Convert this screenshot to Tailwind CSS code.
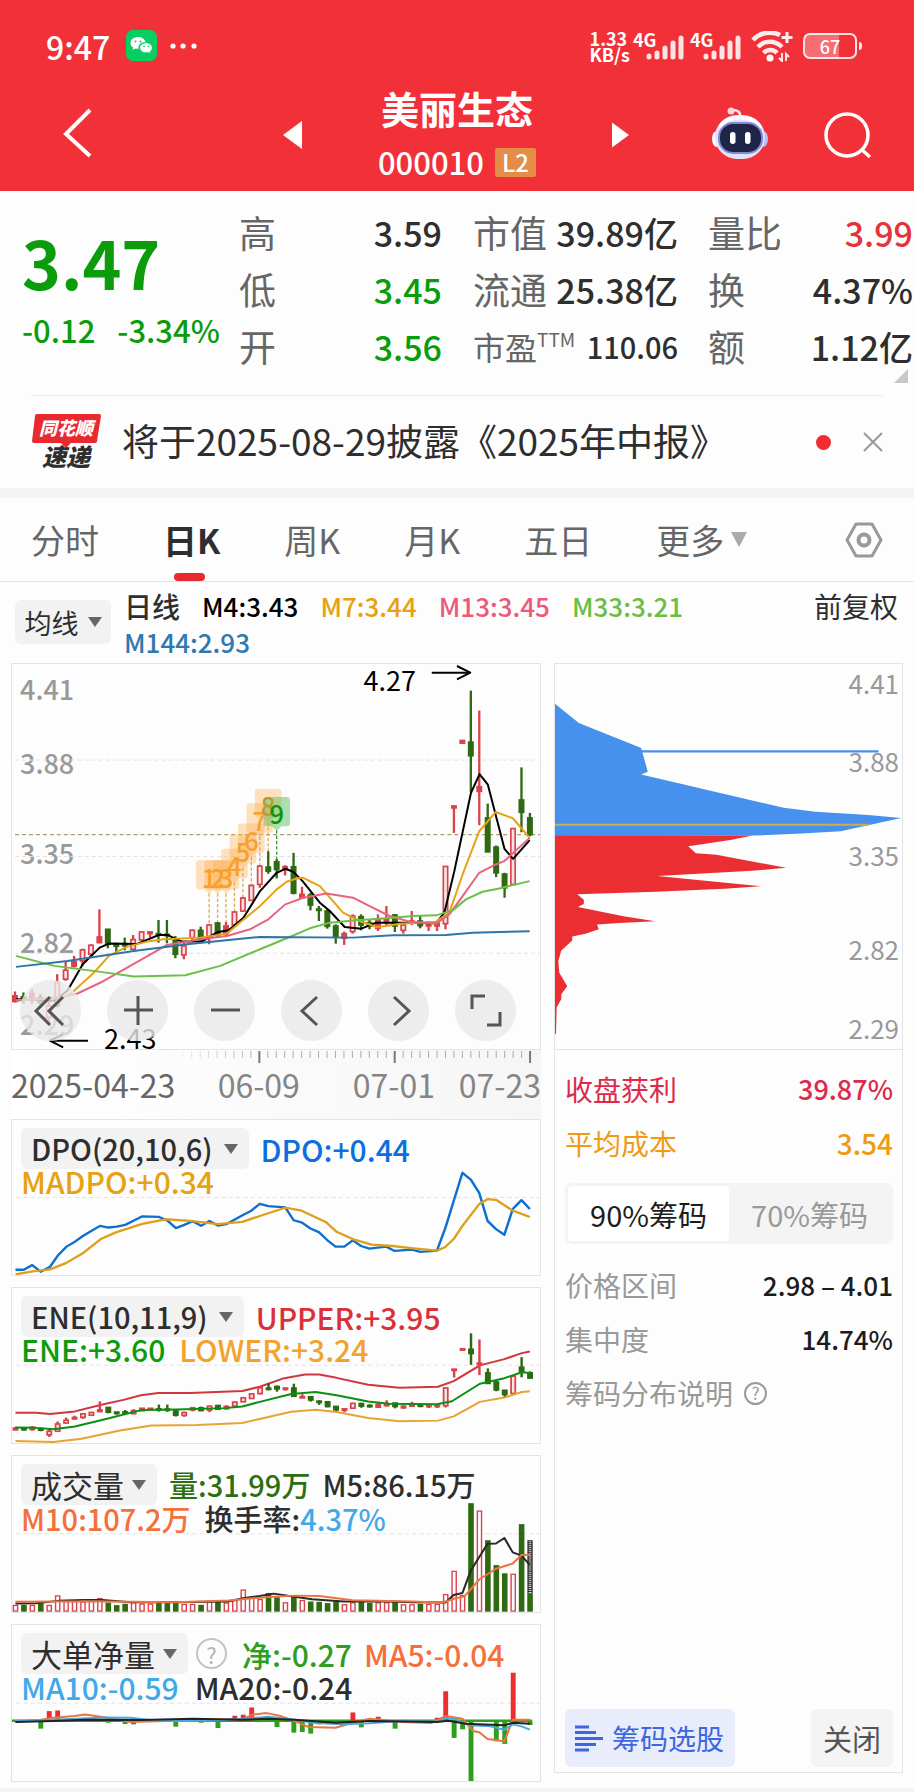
<!DOCTYPE html>
<html lang="zh-CN">
<head>
    <meta charset="UTF-8">
    <meta name="viewport" content="width=device-width, initial-scale=1.0">
    <title>美丽生态 000010</title>
    <script src="https://cdn.jsdelivr.net/npm/@tailwindcss/browser@4"></script>
</head>
<body class="bg-[#fdfdfd] text-[#2e2e2e] font-['Noto_Sans_CJK_SC','Liberation_Sans',sans-serif] font-medium leading-none">

    <!-- Header -->
    <header class="bg-[#f23038] text-white h-[191px] overflow-hidden">
        <div class="h-[92px] pl-[46px] pr-[52px] flex items-center justify-between">
            <div class="flex items-center">
                <span class="w-[66px] text-[32px] leading-8 font-medium">9:47</span>
                <svg class="ml-[14px] size-8" viewBox="0 0 32 32">
                    <rect width="31" height="31" rx="7" fill="#07ce63"/>
                    <path d="M12 7C8 7 4.500 9.500 4.500 13c0 2 1 3.500 2.700 4.600L6.500 20l3-1.500c1 .3 2 .4 3 .3-.6-4 3-7 7-6.700C18.800 9 15.500 7 12 7z" fill="#fff"/>
                    <path d="M20 12.800c-3.600 0-6.200 2.200-6.200 5s2.600 5 6.200 5c.8 0 1.500-.1 2.200-.3l2.400 1.300-.6-2.100c1.500-1 2.400-2.300 2.400-3.900 0-2.800-2.800-5-6.400-5z" fill="#fff" stroke="#07ce63" stroke-width=".8"/>
                    <g fill="#07ce63"><circle cx="9.500" cy="11.500" r="1"/><circle cx="14.500" cy="11.500" r="1"/><circle cx="18" cy="16.500" r=".8"/><circle cx="22.300" cy="16.500" r=".8"/></g>
                </svg>
                <svg class="ml-3 h-2 w-[28px]" viewBox="0 0 28 8" fill="#fff"><circle cx="3" cy="4" r="2.600"/><circle cx="13" cy="4" r="2.600"/><circle cx="24" cy="4" r="2.600"/></svg>
            </div>
            <div class="flex items-center">
                <div class="text-[18px] leading-4 font-bold">1.33<br>KB/s</div>
                <div class="relative ml-[3px] w-[51px] h-[30px]">
                    <span class="absolute left-0 top-0 text-[18px] leading-4 font-bold">4G</span>
                    <svg class="absolute right-0 top-0 w-[38px] h-[30px]" viewBox="0 0 38 30" stroke="#fde4e4" stroke-width="5" stroke-linecap="round"><path d="M3 26v-1M11 26v-4M19 26v-9M27 26V12M35 26V7"/></svg>
                </div>
                <div class="relative ml-[6px] w-[51px] h-[30px]">
                    <span class="absolute left-0 top-0 text-[18px] leading-4 font-bold">4G</span>
                    <svg class="absolute right-0 top-0 w-[38px] h-[30px]" viewBox="0 0 38 30" stroke="#fde4e4" stroke-width="5" stroke-linecap="round"><path d="M3 26v-1M11 26v-4M19 26v-9M27 26V12M35 26V7"/></svg>
                </div>
                <svg class="ml-[10px] w-[42px] h-[31px]" viewBox="0 0 42 31" fill="none" stroke="#fdeaea" stroke-width="4.500">
                    <path d="M2 9C9 1 21 0 29 4M7 16C13 9 24 9 31 16M12.500 22c4-4 10-4 13.500 0"/>
                    <circle cx="19" cy="27" r="3.500" fill="#fff" stroke="none"/>
                    <path d="M36 1v11M30.500 6.500h11" stroke-width="3"/>
                    <path d="M31 22v8l-3-3M35 30v-7l3 3" stroke-width="2"/>
                </svg>
                <div class="ml-[10px] flex items-center">
                    <div class="w-[54px] h-[26px] rounded-[7px] border-2 border-white/85 bg-linear-to-r from-white/30 from-67% to-transparent to-67% text-[18px] leading-[22px] text-center">67</div>
                    <div class="w-[3px] h-2 bg-white/85 rounded-r-sm ml-[2px]"></div>
                </div>
            </div>
        </div>
        <div class="relative h-[99px]">
            <a href="#back" aria-label="返回" class="absolute left-[60px] top-[16px]">
                <svg class="w-8 h-[50px]" viewBox="0 0 32 50" fill="none" stroke="#fff" stroke-width="4"><path d="M30 2L6 26l24 22"/></svg>
            </a>
            <div class="absolute inset-x-0 top-0 flex flex-col items-center">
                <h1 class="text-[38px] leading-8 font-bold">美丽生态</h1>
                <div class="mt-[22px] flex items-center gap-[11px]">
                    <span class="text-[31px] leading-8">000010</span>
                    <span class="bg-[#e38d47] rounded-[2px] h-[29px] px-[7px] text-[24px] leading-[28px]">L2</span>
                </div>
            </div>
            <button aria-label="上一只" class="absolute right-[67%] top-[29px]"><svg class="w-5 h-7" viewBox="0 0 20 28" fill="#fff"><path d="M20 0v28L1 14z"/></svg></button>
            <button aria-label="下一只" class="absolute left-[67%] top-[29px]"><svg class="w-5 h-7" viewBox="0 0 20 28" fill="#fff"><path d="M-2 0v28L17 14z"/></svg></button>
            <button aria-label="智能助手" class="absolute right-[145px] top-[14px]">
                <svg class="w-[58px] h-[54px]" viewBox="0 0 58 54">
                    <path d="M21 4c6 0 9 2 8 8" fill="none" stroke="#fbe5ee" stroke-width="2.500"/><circle cx="20" cy="5" r="3.500" fill="#fbd7dc"/>
                    <ellipse cx="6" cy="33" rx="5" ry="8" fill="#fff"/><ellipse cx="52" cy="33" rx="5" ry="8" fill="#b7bdf5"/>
                    <rect x="4" y="9" width="50" height="44" rx="22" fill="#dfe3fb"/>
                    <path d="M9 22c6-14 34-14 40 0" fill="none" stroke="#fff" stroke-width="4"/>
                    <rect x="8" y="17" width="43" height="30" rx="14" fill="#1e2647" stroke="#8a84d8" stroke-width="2"/>
                    <rect x="19" y="26" width="5.500" height="12" rx="2.700" fill="#fff"/><rect x="34" y="26" width="5.500" height="12" rx="2.700" fill="#fff"/>
                </svg>
            </button>
            <button aria-label="搜索" class="absolute right-[42px] top-[19px]"><svg class="size-12" viewBox="0 0 48 48" fill="none" stroke="#fff" stroke-width="3.500"><circle cx="23" cy="24" r="21"/><path d="M37 38l9 8"/></svg></button>
        </div>
    </header>

    <!-- Quote -->
    <section class="relative h-[204px] pl-[22px] pr-[1px] grid grid-cols-[217fr_203fr_236fr_235fr] whitespace-nowrap">
        <div class="pt-[35px] text-[#0a9c0a]">
            <div class="text-[66px] leading-[70px] font-bold">3.47</div>
            <div class="mt-[18px] flex gap-[22px] text-[31px] leading-8"><span>-0.12</span><span>-3.34%</span></div>
        </div>
        <dl class="pt-[13px] text-[37px] leading-[57px]">
            <div class="flex justify-between"><dt class="text-[#666] font-normal">高</dt><dd class="text-[34px]">3.59</dd></div>
            <div class="flex justify-between"><dt class="text-[#666] font-normal">低</dt><dd class="text-[34px] text-[#0a9c0a]">3.45</dd></div>
            <div class="flex justify-between"><dt class="text-[#666] font-normal">开</dt><dd class="text-[34px] text-[#0a9c0a]">3.56</dd></div>
        </dl>
        <dl class="pt-[13px] pl-[31px] text-[37px] leading-[57px]">
            <div class="flex justify-between"><dt class="text-[#666] font-normal">市值</dt><dd class="text-[34px]">39.89亿</dd></div>
            <div class="flex justify-between"><dt class="text-[#666] font-normal">流通</dt><dd class="text-[34px]">25.38亿</dd></div>
            <div class="flex justify-between"><dt class="text-[#666] font-normal text-[32px] flex">市盈<span class="text-[19px] leading-[42px]">TTM</span></dt><dd class="text-[29px]">110.06</dd></div>
        </dl>
        <dl class="pt-[13px] pl-[30px] text-[37px] leading-[57px]">
            <div class="flex justify-between"><dt class="text-[#666] font-normal">量比</dt><dd class="text-[34px] text-[#e3343b]">3.99</dd></div>
            <div class="flex justify-between"><dt class="text-[#666] font-normal">换</dt><dd class="text-[34px]">4.37%</dd></div>
            <div class="flex justify-between"><dt class="text-[#666] font-normal">额</dt><dd class="text-[34px]">1.12亿</dd></div>
        </dl>
        <svg class="absolute right-[6px] bottom-[12px] size-[14px]" viewBox="0 0 14 14" fill="#c8c8c8"><path d="M14 0v14H0z"/></svg>
    </section>

    <!-- News -->
    <section class="mx-[31px] h-[93px] border-t border-[#ececec] flex items-center">
        <div class="relative w-[70px] h-[58px] italic font-black text-center">
            <svg class="absolute inset-0 w-full h-full" viewBox="0 0 70 58" fill="#e8292f"><path d="M6 1h62q2 0 2 2l-4 25q0 2-3 2H40l-5 5-5-5H4q-3 0-3-2L4 3q0-2 2-2z"/></svg>
            <div class="relative text-white text-[18px] leading-[29px]">同花顺</div>
            <div class="relative text-[24px] leading-[27px]">速递</div>
        </div>
        <a href="#news" class="ml-[21px] text-[37px] leading-[38px] pb-1 font-normal whitespace-nowrap">将于2025-08-29披露《2025年中报》</a>
        <span class="ml-auto size-[15px] rounded-full bg-[#f02b31]"></span>
        <button aria-label="关闭公告" class="ml-[32px]"><svg class="size-5" viewBox="0 0 20 20" stroke="#999" stroke-width="2"><path d="M1 1l18 18M19 1L1 19"/></svg></button>
    </section>
    <div class="h-[10px] bg-[#f4f4f4]"></div>

    <!-- Period tabs -->
    <nav class="h-[84px] px-[31px] border-b border-[#e4e4e4] flex items-center text-[34px] text-[#666] font-normal whitespace-nowrap">
        <div class="flex h-full gap-[64px]">
            <button>分时</button>
            <button class="relative text-[#2e2e2e] font-bold">日K<span class="absolute bottom-0 left-[11px] w-[31px] h-2 rounded-full bg-[#e8292f]"></span></button>
            <button>周K</button>
            <button>月K</button>
            <button>五日</button>
            <button class="flex items-center gap-[7px]">更多<svg class="w-4 h-[15px]" viewBox="0 0 16 15" fill="#aaa"><path d="M0 0h16L8 15z"/></svg></button>
        </div>
        <button aria-label="设置" class="ml-auto"><svg class="w-[38px] h-[36px]" viewBox="0 0 38 36" fill="none" stroke="#999" stroke-width="3" stroke-linejoin="round"><path d="M11 2h16l9 16-9 16H11L2 18z"/><circle cx="19" cy="18" r="5.500" stroke-width="4"/></svg></button>
    </nav>

    <!-- Moving averages -->
    <section class="h-[81px] pl-[15px] pr-[16px] flex">
        <button class="mt-[18px] h-[44px] w-[96px] shrink-0 rounded-md bg-[#f2f2f2] flex items-center justify-center gap-[9px] text-[27px] font-normal">均线<svg class="w-[14px] h-[10px]" viewBox="0 0 14 10" fill="#666"><path d="M0 0h14L7 10z"/></svg></button>
        <div class="ml-[13px] mt-[6px] flex-1 flex flex-wrap content-start gap-x-[22px] text-[26px] leading-[36px]">
            <span class="text-[28px]">日线</span>
            <span class="text-black">M4:3.43</span>
            <span class="text-[#e6a20f]">M7:3.44</span>
            <span class="text-[#ec5a7b]">M13:3.45</span>
            <span class="text-[#6cbd45]">M33:3.21</span>
            <span class="w-full text-[#2f78b0]">M144:2.93</span>
        </div>
        <button class="mt-[6px] h-[36px] text-[28px] font-normal">前复权</button>
    </section>

    <main class="px-[11px] grid grid-cols-[530fr_349fr] gap-[13px]">
        <!-- Left: charts -->
        <div>
            <div class="relative h-[387px] border border-[#e4e4e4]">
                <div class="absolute left-[8px] inset-y-0 text-[27px] text-[#999]">
                    <div class="absolute top-[11px]">4.41</div>
                    <div class="absolute top-[85px]">3.88</div>
                    <div class="absolute top-[175px]">3.35</div>
                    <div class="absolute top-[264px]">2.82</div>
                    <div class="absolute top-[346px]">2.29</div>
                </div>
                <svg id="kline" class="absolute inset-0 w-full h-full" viewBox="33 27 1590 1158" preserveAspectRatio="none"></svg>
                <div id="marks" class="absolute inset-0"></div>
                <div class="absolute right-[124px] top-[2px] text-[27px] text-black font-normal">4.27</div>
                <div class="absolute left-[92px] bottom-[-2px] text-[27px] text-black font-normal">2.43</div>
                <div class="absolute left-[8px] bottom-[8px] flex gap-[26px]">
                    <button aria-label="最早" class="size-[61px] rounded-full bg-[#e9e9e9]/80"><svg viewBox="0 0 61 61" fill="none" stroke="#555" stroke-width="3"><path d="M30 17L16 31l14 14M43 17L29 31l14 14"/></svg></button>
                    <button aria-label="放大" class="size-[61px] rounded-full bg-[#e9e9e9]/80"><svg viewBox="0 0 61 61" stroke="#555" stroke-width="3"><path d="M31 16v29M17 30h29"/></svg></button>
                    <button aria-label="缩小" class="size-[61px] rounded-full bg-[#e9e9e9]/80"><svg viewBox="0 0 61 61" stroke="#555" stroke-width="3"><path d="M17 30h29"/></svg></button>
                    <button aria-label="左移" class="size-[61px] rounded-full bg-[#e9e9e9]/80"><svg viewBox="0 0 61 61" fill="none" stroke="#555" stroke-width="3"><path d="M36 17L21 31l15 14"/></svg></button>
                    <button aria-label="右移" class="size-[61px] rounded-full bg-[#e9e9e9]/80"><svg viewBox="0 0 61 61" fill="none" stroke="#555" stroke-width="3"><path d="M26 17l15 14-15 14"/></svg></button>
                    <button aria-label="全屏" class="size-[61px] rounded-full bg-[#e9e9e9]/80"><svg viewBox="0 0 61 61" fill="none" stroke="#555" stroke-width="3"><path d="M17 29V16h13M32 45h13V32"/></svg></button>
                </div>
            </div>
            <div class="relative h-[69px] bg-linear-to-r from-white to-[#f6f6f6] text-[32px] text-[#858585] font-normal">
                <svg id="ticks" class="absolute inset-x-0 top-0 w-full h-[14px]" viewBox="11 0 530 14" preserveAspectRatio="none"></svg>
                <span class="absolute left-0 top-[18px] text-[#666]">2025-04-23</span>
                <span class="absolute left-[39%] top-[18px]">06-09</span>
                <span class="absolute right-[20%] top-[18px]">07-01</span>
                <span class="absolute right-0 top-[18px]">07-23</span>
            </div>

            <div class="flex flex-col gap-[11px]">
                <div class="relative h-[157px] border border-[#e4e4e4] bg-[#fdfdfd]">
                    <svg id="dpo" class="absolute inset-0 w-full h-full" viewBox="31 27 1511 470" preserveAspectRatio="none"></svg>
                    <div class="relative pl-[9px] pt-[8px] text-[30px] whitespace-nowrap">
                        <div class="flex items-center gap-[12px]">
                            <button class="h-[41px] pl-[10px] pr-[11px] rounded-md bg-[#f2f2f2] flex items-center gap-[11px] text-[29px]">DPO(20,10,6)<svg class="w-[14px] h-[10px]" viewBox="0 0 14 10" fill="#666"><path d="M0 0h14L7 10z"/></svg></button>
                            <span class="text-[#0b6fe0]">DPO:+0.44</span>
                        </div>
                        <div class="h-7 leading-6 text-[#e6a20f]">MADPO:+0.34</div>
                    </div>
                </div>

                <div class="relative h-[157px] border border-[#e4e4e4] bg-[#fdfdfd]">
                    <svg id="ene" class="absolute inset-0 w-full h-full" viewBox="31 532 1511 471" preserveAspectRatio="none"></svg>
                    <div class="relative pl-[9px] pt-[8px] text-[30px] whitespace-nowrap">
                        <div class="flex items-center gap-[12px]">
                            <button class="h-[41px] pl-[10px] pr-[11px] rounded-md bg-[#f2f2f2] flex items-center gap-[11px] text-[29px]">ENE(10,11,9)<svg class="w-[14px] h-[10px]" viewBox="0 0 14 10" fill="#666"><path d="M0 0h14L7 10z"/></svg></button>
                            <span class="text-[#da3038]">UPPER:+3.95</span>
                        </div>
                        <div class="h-7 leading-6 flex gap-[14px]"><span class="text-[#0a9c0a]">ENE:+3.60</span><span class="text-[#f2a32e]">LOWER:+3.24</span></div>
                    </div>
                </div>

                <div class="relative h-[158px] border border-[#e4e4e4] bg-[#fdfdfd]">
                    <svg id="vol" class="absolute inset-0 w-full h-full" viewBox="31 16 1511 476" preserveAspectRatio="none"></svg>
                    <div class="relative pl-[9px] pt-[8px] text-[29px] whitespace-nowrap">
                        <div class="flex items-center gap-[12px]">
                            <button class="h-[41px] pl-[10px] pr-[11px] rounded-md bg-[#f2f2f2] flex items-center gap-[8px] text-[31px] font-normal">成交量<svg class="w-[14px] h-[10px]" viewBox="0 0 14 10" fill="#666"><path d="M0 0h14L7 10z"/></svg></button>
                            <span class="text-[#2c6e10]">量:31.99万</span><span>M5:86.15万</span>
                        </div>
                        <div class="h-7 leading-[26px] flex gap-[14px]"><span class="text-[#f4703a]">M10:107.2万</span><span>换手率:<span class="text-[#42a9e8]">4.37%</span></span></div>
                    </div>
                </div>

                <div class="relative h-[158px] border border-[#e4e4e4] bg-[#fdfdfd]">
                    <svg id="big" class="absolute inset-0 w-full h-full" viewBox="31 522 1511 471" preserveAspectRatio="none"></svg>
                    <div class="relative pl-[9px] pt-[8px] text-[30px] whitespace-nowrap">
                        <div class="flex items-center">
                            <button class="h-[41px] pl-[10px] pr-[11px] rounded-md bg-[#f2f2f2] flex items-center gap-[8px] text-[31px] font-normal">大单净量<svg class="w-[14px] h-[10px]" viewBox="0 0 14 10" fill="#666"><path d="M0 0h14L7 10z"/></svg></button>
                            <button aria-label="说明" class="ml-[8px] size-[31px] rounded-full border-2 border-[#c4c4c4] text-[#b5b5b5] text-[22px] leading-[26px] font-normal">?</button>
                            <span class="ml-[15px] text-[#2f9e1f]">净:-0.27</span><span class="ml-[12px] text-[#f4703a]">MA5:-0.04</span>
                        </div>
                        <div class="h-7 leading-[26px] flex gap-[16px]"><span class="text-[#42a9e8]">MA10:-0.59</span><span>MA20:-0.24</span></div>
                    </div>
                </div>
            </div>
        </div>

        <!-- Right: chip distribution -->
        <aside class="mb-[9px] border border-[#e4e4e4] flex flex-col">
            <div class="relative h-[386px] border-b border-[#e4e4e4] text-[26px] text-[#999] font-normal">
                <svg class="absolute inset-0 w-full h-full" viewBox="43 25 1047 1160" preserveAspectRatio="none">
                    <path fill="#4690ee" d="M43 145L115 203 303 278 323 350 303 358 733 458 828 470 988 480 1088 489 1015 505 905 529 787 536 640 542H43z"/>
                    <path stroke="#4690ee" stroke-width="7" d="M303 288H1019"/>
                    <path stroke="#d3a94d" stroke-width="6" d="M43 509H990"/>
                    <path fill="#ea2e31" d="M43 541L640 542 572 555 445 574 468 595 530 600 740 639 637 648 352 664 664 695 555 702 347 711 110 719 130 735 130 748 112 757 250 785 345 800 238 805 170 810 175 824 135 838 95 846 95 858 62 888 53 920 56 955 80 996 62 1020 62 1034 48 1060 46 1140H43z"/>
                </svg>
                <span class="absolute right-[3px] top-[6px]">4.41</span>
                <span class="absolute right-[3px] top-[84px]">3.88</span>
                <span class="absolute right-[3px] top-[178px]">3.35</span>
                <span class="absolute right-[3px] top-[272px]">2.82</span>
                <span class="absolute right-[3px] top-[351px]">2.29</span>
            </div>
            <div class="flex-1 flex flex-col pl-[10px] pr-[9px] pt-[12px] pb-[5px] text-[28px] leading-[54px] font-normal">
                <div class="flex justify-between text-[#dd2a4a]"><span>收盘获利</span><span class="text-[27px] font-medium">39.87%</span></div>
                <div class="flex justify-between text-[#f09a13]"><span>平均成本</span><span class="font-medium">3.54</span></div>
                <div class="mt-[13px] h-[61px] rounded-md bg-[#f4f4f4] p-[3px] grid grid-cols-2">
                    <button class="bg-white rounded-sm text-[29px] text-[#1c1c1c]">90%筹码</button>
                    <button class="text-[29px] text-[#999]">70%筹码</button>
                </div>
                <div class="mt-[14px] flex justify-between"><span class="text-[#999]">价格区间</span><span class="text-[26px] font-medium text-[#1c1c1c]">2.98 – 4.01</span></div>
                <div class="flex justify-between"><span class="text-[#999]">集中度</span><span class="text-[26px] font-medium text-[#1c1c1c]">14.74%</span></div>
                <a href="#help" class="flex items-center text-[#999]">筹码分布说明<span class="ml-[11px] size-[23px] rounded-full border-2 border-[#999] text-[17px] leading-[18px] text-center">?</span></a>
                <div class="mt-auto flex justify-between">
                    <button class="h-[58px] pl-[10px] pr-[11px] rounded-md bg-[#e9edfb] text-[#3d66e0] flex items-center gap-[9px]">
                        <svg class="w-[28px] h-[27px]" viewBox="0 0 28 27" stroke="#3d66e0" stroke-width="3"><path d="M0 2h14M0 7.500h21M0 13.500h28M0 19.500h21M0 25h14"/></svg>筹码选股</button>
                    <button class="h-[58px] px-[12px] rounded-md bg-[#f4f4f4] text-[#555] text-[29px]">关闭</button>
                </div>
            </div>
        </aside>
    </main>
    <div class="mt-[6px] h-[4px] bg-[#f5f5f5]"></div>

    <script>
        var RED = '#d9434b', GREEN = '#2f6a12';

        function el(parent, name, attrs) {
            var node = document.createElementNS('http://www.w3.org/2000/svg', name);
            for (var k in attrs) node.setAttribute(k, attrs[k]);
            parent.appendChild(node);
            return node;
        }
        function line(svg, color, points, width) {
            el(svg, 'polyline', { points: points, fill: 'none', stroke: color, 'stroke-width': width || 6, 'stroke-linejoin': 'round' });
        }
        function dash(svg, y, color) {
            el(svg, 'path', { d: 'M0 ' + y + 'H1700', stroke: color || '#e3e3e3', 'stroke-width': color ? 4 : 3, 'stroke-dasharray': '12 9' });
        }

        // high, low, body top, body bottom, r = up / g = down / f = up, solid
        var candles = [
            [1012,1045,1025,1042,'f'],[1015,1048,1028,1032,'g'],[1005,1050,1018,1038,'f'],[1020,1055,1030,1045,'g'],
            [1030,1110,1055,1090,'r'],[960,1060,985,1055,'r'],[922,980,948,975,'r'],[905,940,922,936,'f'],
            [883,935,887,920,'r'],[870,905,873,900,'r'],[765,867,848,865,'f'],[825,882,825,870,'g'],
            [865,895,870,876,'g'],[850,888,868,874,'g'],[842,888,856,885,'r'],[830,860,833,857,'r'],
            [830,850,833,838,'f'],[797,865,838,842,'g'],[797,867,840,844,'g'],[845,912,858,900,'g'],
            [865,915,875,902,'r'],[825,862,828,850,'r'],[817,860,828,855,'g'],[810,870,812,850,'r'],
            [803,848,806,842,'g'],[803,845,815,838,'f'],[770,815,773,812,'r'],[727,772,731,770,'r'],
            [690,740,693,738,'r'],[632,700,635,690,'r'],[590,658,638,650,'g'],[613,672,622,645,'g'],
            [632,663,637,645,'f'],[595,720,637,716,'g'],[697,730,720,730,'f'],[715,768,722,752,'g'],
            [755,800,764,768,'g'],[763,823,770,816,'g'],[810,868,815,848,'g'],[832,872,838,852,'f'],
            [780,838,785,832,'r'],[780,828,787,812,'g'],[795,825,805,815,'g'],[780,830,795,822,'f'],
            [755,815,795,805,'f'],[780,833,782,815,'g'],[808,838,812,828,'r'],[770,812,800,805,'f'],
            [785,822,800,814,'g'],[800,830,804,815,'f'],[800,830,804,815,'f'],[635,825,636,808,'r'],
            [453,535,454,460,'f'],[257,265,257,265,'f'],[107,412,262,303,'g'],[167,512,396,410,'f'],
            [447,592,490,592,'g'],[573,668,578,655,'g'],[655,730,659,700,'g'],[521,692,522,690,'r'],
            [338,533,436,473,'g'],[475,545,490,540,'g']
        ];
        function drawCandles(svg, x0, step, k, b, w) {
            candles.forEach(function (c, i) {
                var x = x0 + step * i, col = c[4] === 'g' ? GREEN : RED;
                var top = c[2] * k + b, h = Math.max((c[3] - c[2]) * k, 4);
                el(svg, 'path', { d: 'M' + x + ' ' + (c[0] * k + b) + 'V' + (c[1] * k + b), stroke: col, 'stroke-width': 7 });
                el(svg, 'rect', { x: x - w / 2, y: top, width: w, height: h, fill: c[4] === 'r' ? '#fbe4e4' : col, stroke: col, 'stroke-width': 5 });
            });
        }

        var k = document.getElementById('kline');
        dash(k, 316); dash(k, 606); dash(k, 897); dash(k, 540, '#aca06a');
        drawCandles(k, 42, 25.42, 1, 0, 13);
        line(k, '#000', '45,1035 160,1040 200,1010 246,930 297,880 325,868 410,869 475,842 500,842 545,862 605,862 650,834 685,828 730,790 780,710 830,655 856,643 880,652 908,680 960,745 990,770 1035,818 1085,823 1130,805 1210,805 1310,807 1335,775 1365,650 1415,415 1441,358 1466,390 1516,583 1542,613 1592,557');
        line(k, '#e3a416', '45,1038 120,1035 190,1030 220,1010 280,955 325,905 380,877 440,862 490,855 600,850 680,838 725,800 780,755 830,705 860,682 890,672 910,670 960,695 1030,775 1080,800 1130,818 1160,815 1200,808 1310,802 1350,775 1390,660 1440,530 1490,472 1541,491 1592,550');
        line(k, '#e8637f', '45,1040 190,1028 230,1018 300,985 425,915 500,872 600,855 680,845 750,825 805,795 856,750 910,730 980,717 1060,730 1110,755 1170,785 1230,802 1310,808 1350,780 1390,725 1440,655 1490,630 1515,620 1592,550');
        line(k, '#6cc04a', '45,905 160,935 300,953 400,967 555,963 660,935 780,885 860,852 930,822 990,805 1070,798 1160,792 1240,785 1310,783 1360,768 1400,735 1450,712 1500,702 1592,680');
        line(k, '#2f74a8', '45,938 200,920 400,890 560,870 700,856 780,848 1060,850 1180,843 1340,842 1420,835 1592,831');
        line(k, '#000', '1297,53 1411,53');
        line(k, '#000', '1373,33 1413,53 1373,73');
        line(k, '#000', '262,1160 150,1160');
        line(k, '#000', '187,1141 147,1160 187,1180');

        // nine-turn markers above candles 23..31
        var marks = document.getElementById('marks');
        [617, 617, 617, 583, 540, 507, 446, 402, 427].forEach(function (top, n) {
            var i = 23 + n, x = 42 + 25.42 * i, nine = n === 8;
            var fill = nine ? '#5fc05f' : '#fbab4c';
            el(k, 'path', { d: 'M' + x + ' ' + (top + 100) + 'V' + candles[i][0], stroke: nine ? '#3f9a3f' : '#e0aa50', 'stroke-width': 4, 'stroke-dasharray': '10 6' });
            el(k, 'path', { d: 'M' + (x - 30) + ' ' + top + 'h60q10 0 10 10v68q0 10-10 10h-16l-14 14-14-14h-16q-10 0-10-10v-68q0-10 10-10z', fill: fill, 'fill-opacity': nine ? .5 : .36 });
            var m = document.createElement('span');
            m.className = 'absolute w-[28px] text-center text-[26px]';
            m.style.left = 'calc(' + ((x - 33) / 15.9) + '% - 14px)';
            m.style.top = (top / 3 - 6) + 'px';
            m.style.color = nine ? '#089808' : n === 7 ? '#b99a38' : '#f7a02c';
            m.textContent = n + 1;
            marks.appendChild(m);
        });

        var t = document.getElementById('ticks');
        for (var i = 20; i < 62; i++) {
            var big = i === 29 || i === 45 || i === 61;
            el(t, 'path', { d: 'M' + (14 + 8.46 * i) + ' 1v' + (big ? 12 : 7), stroke: big ? '#777' : '#aaa', 'stroke-width': big ? 2 : 1, 'stroke-opacity': big ? 1 : Math.min(1, (i - 18) / 12) });
        }

        var d = document.getElementById('dpo');
        dash(d, 262);
        line(d, '#0f6fd0', '41,481 65,481 89,467 113,487 140,472 163,437 187,411 211,396 235,378 259,363 283,348 307,353 331,350 355,345 380,332 404,319 452,321 476,332 500,355 524,345 548,334 572,348 596,333 620,347 644,343 692,315 716,302 740,281 765,288 813,292 837,331 861,338 885,356 909,367 933,391 957,411 982,411 1006,392 1030,409 1054,417 1102,411 1126,424 1175,420 1200,427 1247,423 1271,355 1320,187 1344,208 1368,248 1392,333 1416,358 1440,375 1464,297 1489,270 1513,297', 7);
        line(d, '#dca01c', '41,495 90,486 140,480 185,461 235,430 285,388 330,367 404,342 470,328 540,333 620,343 690,336 740,318 813,293 860,302 930,337 960,366 1006,388 1060,405 1120,409 1180,416 1247,423 1270,413 1295,388 1320,348 1368,282 1392,267 1416,269 1464,302 1513,321', 7);

        var e = document.getElementById('ene');
        dash(e, 767);
        line(e, '#d0363d', '41,911 100,911 140,915 211,907 290,886 350,872 400,858 450,851 540,851 690,845 740,832 810,806 870,795 910,795 960,805 1050,826 1140,835 1250,832 1295,815 1370,767 1440,748 1490,730 1513,725');
        drawCandles(e, 41, 24.14, .314, 636, 12);
        line(e, '#0a8f12', '41,956 100,957 150,961 211,953 300,930 400,903 500,901 640,897 690,892 740,878 830,854 900,848 960,858 1050,877 1110,884 1247,885 1290,876 1370,823 1440,806 1490,788 1513,790');
        line(e, '#e8a432', '41,997 150,1000 230,990 340,965 430,950 560,948 690,942 740,930 830,908 900,902 960,909 1050,927 1140,937 1250,935 1295,922 1370,878 1440,865 1490,848 1513,846');

        var v = document.getElementById('vol');
        var volumes = ['r470','g470','r470','g465','r470','r441','r458','r458','r460','r458','r449','g463','g471','g467','r462','r466','r466','g465','g465','g463','r467','r467','g470','r458','g456','r463','r455','r423','r445','r452','g434','g447','r462','g446','r455','g460','g461','g465','g460','r468','r462','g460','g464','r462','r462','g458','r468','r468','g467','r467','r467','r437','r366','r440','g160','r182','g273','g349','g374','r375','g224','g435'];
        dash(v, 253);
        volumes.forEach(function (s, i) {
            var up = s[0] === 'r', y = +s.slice(1), x = 41 + 24.14 * i;
            el(v, 'rect', { x: x - 6, y: y + 2, width: 12, height: 487 - y, fill: up ? '#fff' : GREEN, stroke: up ? RED : GREEN, 'stroke-width': 4 });
        });
        // projected volume of the running day
        el(v, 'path', { d: 'M1513.500 273V435', stroke: '#222', 'stroke-width': 15 });
        el(v, 'path', { d: 'M1513.500 275V435', stroke: '#ddd', 'stroke-width': 8, 'stroke-dasharray': '3 3' });
        line(v, '#2a2a2a', '41,466 100,465 163,458 235,455 290,455 370,462 500,462 650,460 692,450 740,443 780,436 830,444 890,453 980,460 1100,460 1180,462 1271,463 1295,440 1320,434 1344,365 1392,284 1416,283 1440,266 1464,310 1489,320 1513,348');
        line(v, '#ec7440', '41,461 163,460 300,460 500,462 650,457 765,446 840,442 910,443 1006,456 1180,460 1260,464 1300,450 1325,445 1368,393 1416,360 1464,344 1489,318 1513,318');

        var g = document.getElementById('big');
        var flows = { 3: 835, 4: 782, 5: 780, 11: 817, 13: 821, 14: 822, 19: 829, 20: 803, 22: 817, 24: 833, 26: 796, 27: 793, 28: 771, 31: 830, 33: 847, 34: 845, 35: 850, 36: 822, 40: 786, 41: 831, 43: 799, 45: 835, 50: 802, 51: 722, 52: 863, 53: 837, 54: 993, 57: 873, 58: 881, 59: 666, 61: 824 };
        dash(g, 758);
        el(g, 'path', { d: 'M31 811H1519', stroke: '#2f9e1f', 'stroke-width': 7 });
        for (var n in flows) {
            el(g, 'rect', { x: 41 + 24.14 * n - 7, y: Math.min(811, flows[n]), width: 14, height: Math.abs(flows[n] - 811), fill: flows[n] < 811 ? '#ea2e31' : '#2f9e1f' });
        }
        line(g, '#ec7440', '41,815 113,808 150,802 210,797 240,792 290,800 370,815 470,812 600,808 690,806 720,793 760,788 800,797 840,812 880,830 957,832 1006,817 1054,805 1150,815 1230,818 1271,797 1320,805 1350,842 1368,846 1392,866 1416,869 1440,874 1464,808 1513,808');
        line(g, '#4fa8dc', '41,812 200,806 300,801 370,802 450,812 600,810 690,806 765,799 840,808 900,818 980,822 1054,819 1150,811 1247,814 1271,803 1300,806 1340,825 1400,828 1440,838 1464,822 1489,828 1513,838');
        line(g, '#222', '41,815 150,812 240,808 400,809 550,805 690,808 765,805 840,808 957,817 1054,812 1247,815 1280,811 1330,820 1440,825 1464,817 1513,820');
    </script>
</body>
</html>
